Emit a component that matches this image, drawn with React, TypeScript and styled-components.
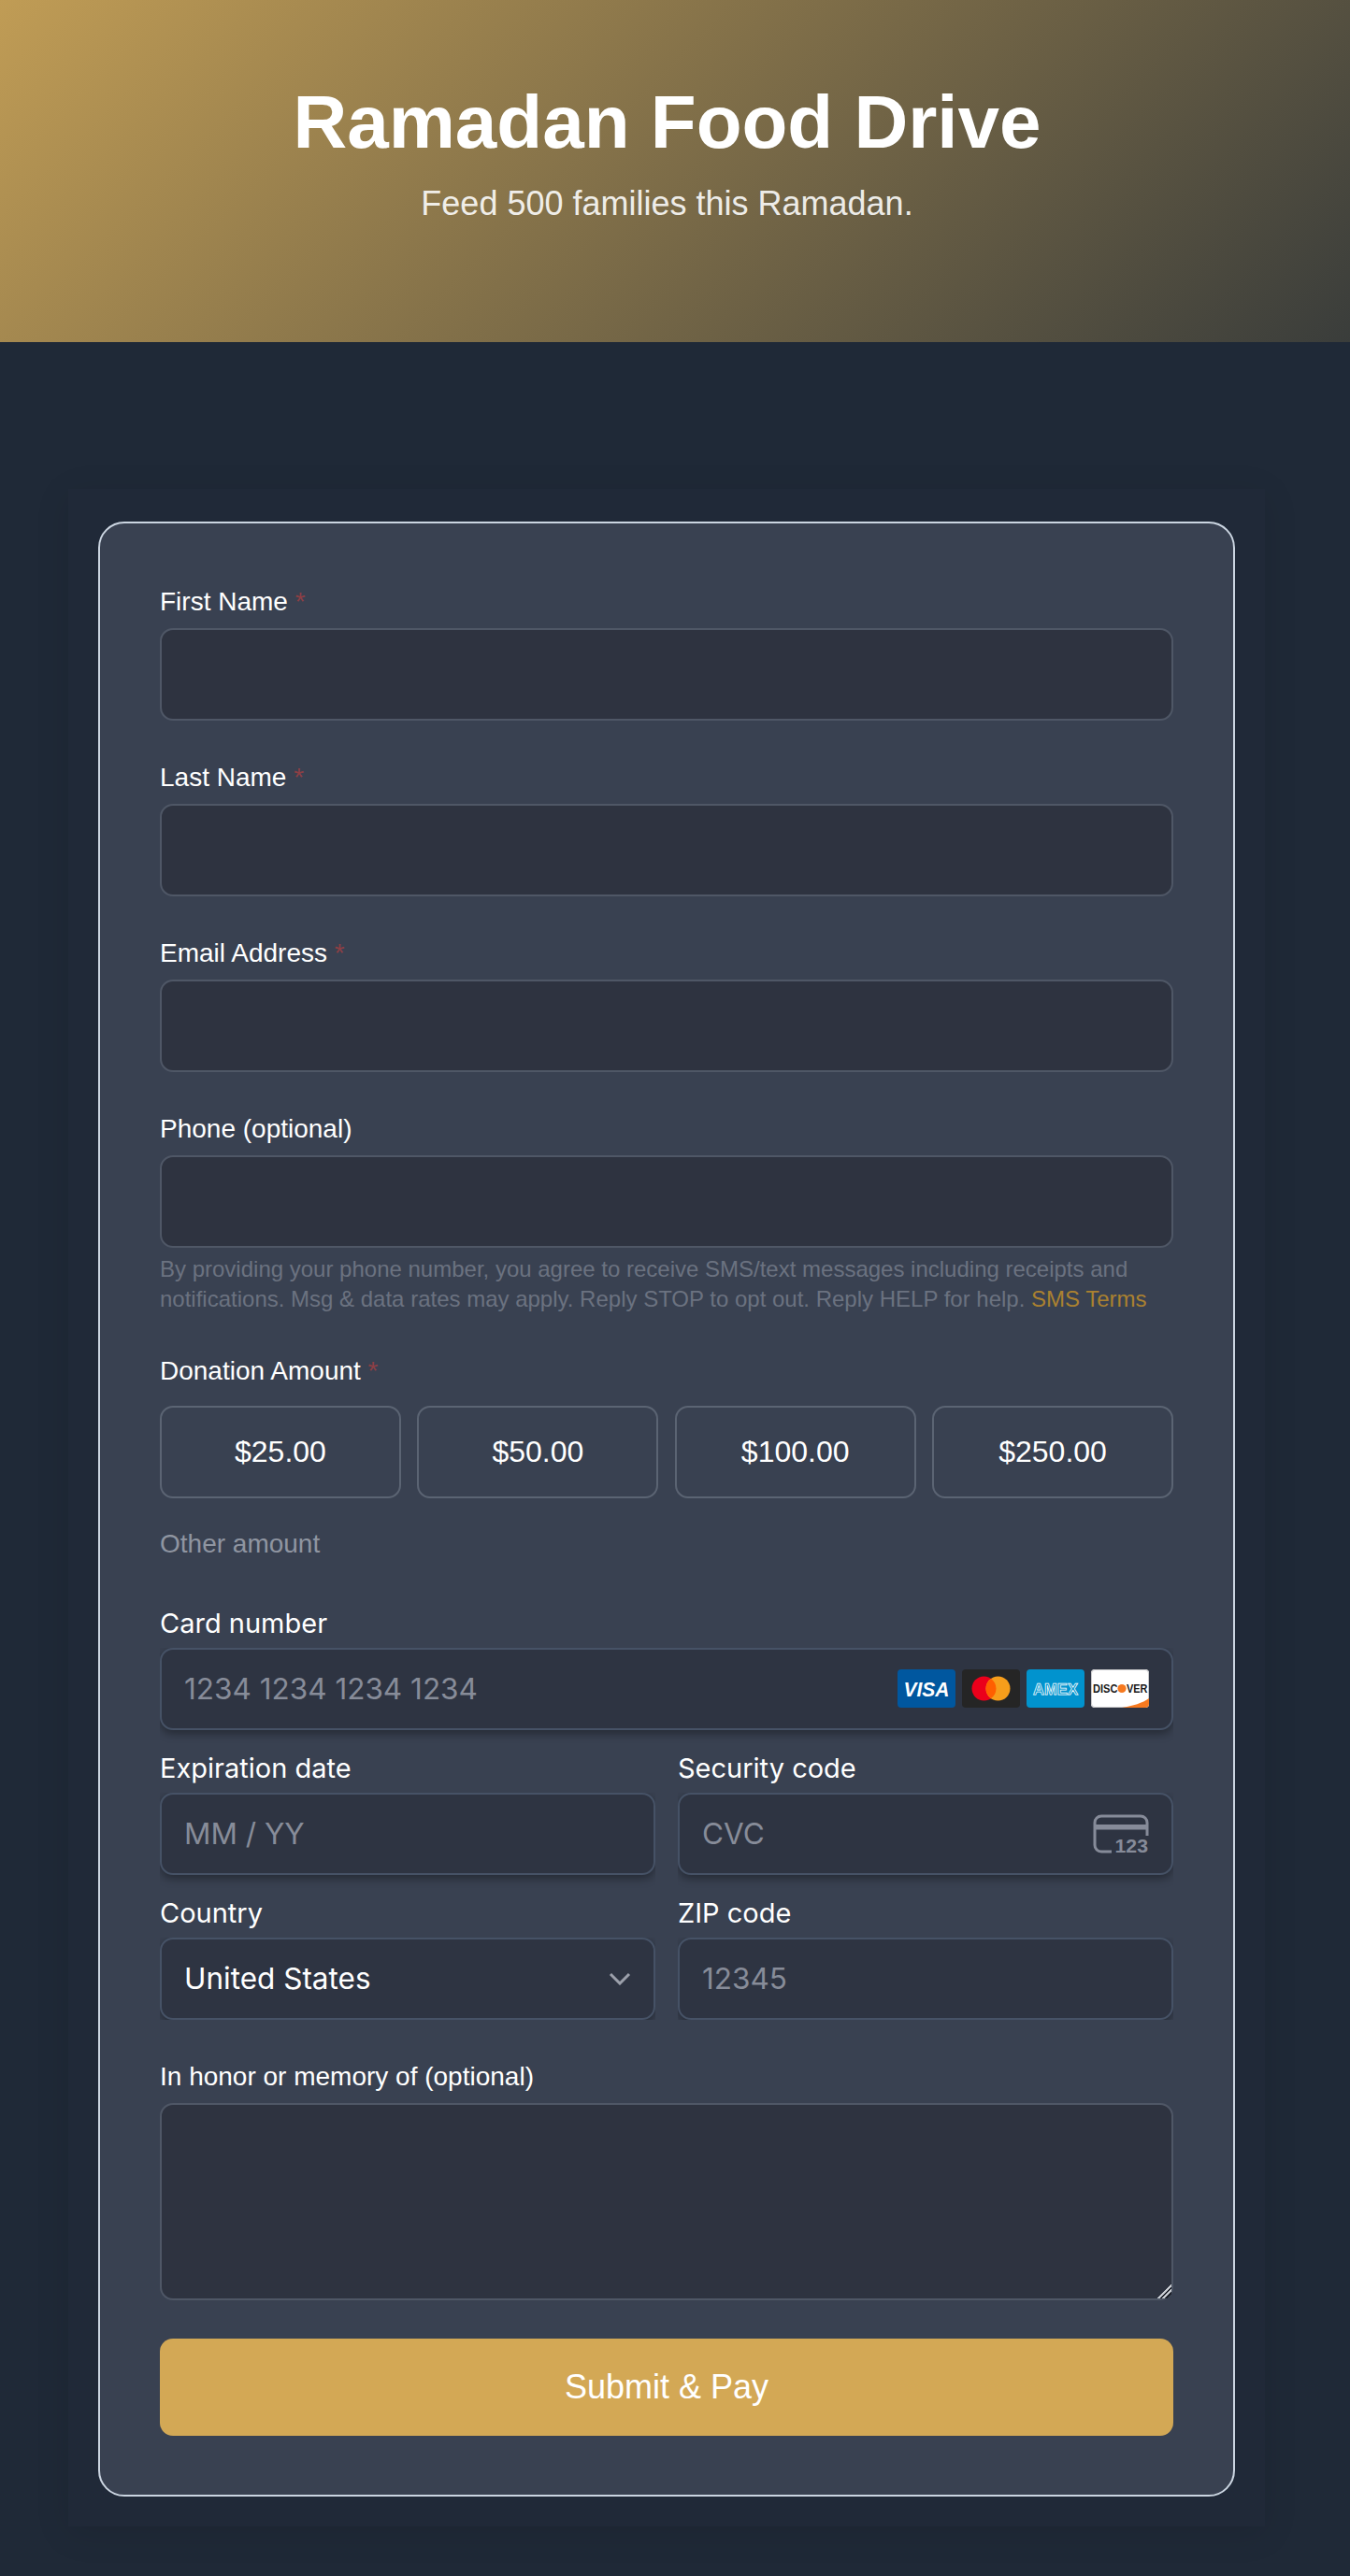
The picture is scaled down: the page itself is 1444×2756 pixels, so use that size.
import styled, { createGlobalStyle } from 'styled-components';

const GlobalStyle = createGlobalStyle`
  * {
    box-sizing: border-box;
  }
  html,
  body {
    margin: 0;
    padding: 0;
    background: #1f2937;
    color: #fff;
    font-family: 'Liberation Sans', Arial, sans-serif;
  }
`;

const amounts = ['$25.00', '$50.00', '$100.00', '$250.00'];

function VisaMark() {
  return (
    <BrandIcon viewBox="0 0 62 41">
      <rect width="62" height="41" rx="4" fill="#00579f" />
      <text
        x="31"
        y="29"
        textAnchor="middle"
        fontFamily="'Liberation Sans', sans-serif"
        fontSize="22"
        fontWeight="700"
        fontStyle="italic"
        fill="#fff"
        textLength="49"
        lengthAdjust="spacingAndGlyphs"
      >
        VISA
      </text>
    </BrandIcon>
  );
}

function MastercardMark() {
  return (
    <BrandIcon viewBox="0 0 62 41">
      <rect width="62" height="41" rx="4" fill="#252525" />
      <circle cx="23.5" cy="20.5" r="13" fill="#eb001b" />
      <circle cx="38.5" cy="20.5" r="13" fill="#f79e1b" />
      <path d="M31 9.9a13 13 0 0 1 0 21.2a13 13 0 0 1 0-21.2z" fill="#ff5f00" />
    </BrandIcon>
  );
}

function AmexMark() {
  return (
    <BrandIcon viewBox="0 0 62 41">
      <rect width="62" height="41" rx="4" fill="#0193ce" />
      <text
        x="31"
        y="27"
        textAnchor="middle"
        fontFamily="'Liberation Sans', sans-serif"
        fontSize="17"
        fontWeight="700"
        fill="#0193ce"
        stroke="#fff"
        strokeWidth="0.75"
        textLength="48"
        lengthAdjust="spacingAndGlyphs"
      >
        AMEX
      </text>
    </BrandIcon>
  );
}

function DiscoverMark() {
  return (
    <BrandIcon viewBox="0 0 62 41">
      <rect width="62" height="41" rx="4" fill="#fff" />
      <rect x="0.5" y="0.5" width="61" height="40" rx="3.5" fill="none" stroke="#c9c9cb" />
      <path d="M33 41C45 39 55 36 62 31V37a4 4 0 0 1-4 4z" fill="#f6791f" />
      <text
        x="2"
        y="24.5"
        fontFamily="'Liberation Sans', sans-serif"
        fontSize="12"
        fontWeight="700"
        fill="#1a1a1a"
        textLength="26.5"
        lengthAdjust="spacingAndGlyphs"
      >
        DISC
      </text>
      <circle cx="33" cy="20.5" r="4.6" fill="#f6791f" />
      <text
        x="38"
        y="24.5"
        fontFamily="'Liberation Sans', sans-serif"
        fontSize="12"
        fontWeight="700"
        fill="#1a1a1a"
        textLength="22.5"
        lengthAdjust="spacingAndGlyphs"
      >
        VER
      </text>
    </BrandIcon>
  );
}

function CvcMark() {
  return (
    <CvcIcon viewBox="0 0 60 46">
      <path
        d="M20 40H9a7 7 0 0 1-7-7V9a7 7 0 0 1 7-7h42a7 7 0 0 1 7 7v14"
        fill="none"
        stroke="#868b99"
        strokeWidth="3"
      />
      <rect x="2" y="11" width="56" height="5.5" fill="#868b99" />
      <text
        x="23.5"
        y="41"
        fontFamily="'Liberation Sans', sans-serif"
        fontSize="20"
        fontWeight="700"
        fill="#868b99"
        textLength="35.5"
        lengthAdjust="spacingAndGlyphs"
      >
        123
      </text>
    </CvcIcon>
  );
}

export default function App() {
  return (
    <>
      <GlobalStyle />
      <Hero>
        <HeroTitle>Ramadan Food Drive</HeroTitle>
        <HeroText>Feed 500 families this Ramadan.</HeroText>
      </Hero>
      <Main>
        <Panel>
          <Card>
            <Field>
              <Label>
                First Name <Required>*</Required>
              </Label>
              <TextInput type="text" />
            </Field>
            <Field>
              <Label>
                Last Name <Required>*</Required>
              </Label>
              <TextInput type="text" />
            </Field>
            <Field>
              <Label>
                Email Address <Required>*</Required>
              </Label>
              <TextInput type="email" />
            </Field>
            <Field>
              <Label>Phone (optional)</Label>
              <TextInput type="tel" />
              <Help>
                By providing your phone number, you agree to receive SMS/text
                messages including receipts and notifications. Msg &amp; data
                rates may apply. Reply STOP to opt out. Reply HELP for help.{' '}
                <HelpLink>SMS Terms</HelpLink>
              </Help>
            </Field>
            <Label>
              Donation Amount <Required>*</Required>
            </Label>
            <AmountGrid>
              {amounts.map((amount) => (
                <AmountButton key={amount} type="button">
                  {amount}
                </AmountButton>
              ))}
            </AmountGrid>
            <OtherAmount>Other amount</OtherAmount>

            <PaymentBlock>
              <PayLabel>Card number</PayLabel>
              <PayFrame>
                <PayField>
                  <Placeholder>1234 1234 1234 1234</Placeholder>
                  <Brands>
                    <VisaMark />
                    <MastercardMark />
                    <AmexMark />
                    <DiscoverMark />
                  </Brands>
                </PayField>
              </PayFrame>
              <PayRow>
                <div>
                  <PayLabel>Expiration date</PayLabel>
                  <PayFrame>
                    <PayField>
                      <Placeholder>MM / YY</Placeholder>
                    </PayField>
                  </PayFrame>
                </div>
                <div>
                  <PayLabel>Security code</PayLabel>
                  <PayFrame>
                    <PayField>
                      <Placeholder>CVC</Placeholder>
                      <CvcMark />
                    </PayField>
                  </PayFrame>
                </div>
              </PayRow>
              <PayRow>
                <div>
                  <PayLabel>Country</PayLabel>
                  <PayFrame $flush>
                    <PayField>
                      <PayValue>United States</PayValue>
                      <Chevron viewBox="0 0 24 14">
                        <path
                          d="M2 2l10 10L22 2"
                          fill="none"
                          stroke="#9ca0ab"
                          strokeWidth="3"
                        />
                      </Chevron>
                    </PayField>
                  </PayFrame>
                </div>
                <div>
                  <PayLabel>ZIP code</PayLabel>
                  <PayFrame $flush>
                    <PayField>
                      <Placeholder>12345</Placeholder>
                    </PayField>
                  </PayFrame>
                </div>
              </PayRow>
            </PaymentBlock>

            <MemoryField>
              <Label>In honor or memory of (optional)</Label>
              <TextArea />
            </MemoryField>
            <SubmitButton type="button">Submit &amp; Pay</SubmitButton>
          </Card>
        </Panel>
      </Main>
    </>
  );
}

const Hero = styled.header`
  height: 366px;
  padding: 85.6px 17px 0 0;
  text-align: center;
  background: linear-gradient(135deg, #c09c55, #3a3d3b);
`;

const HeroTitle = styled.h1`
  margin: 0;
  font-size: 80px;
  line-height: 90px;
  font-weight: 700;
`;

const HeroText = styled.p`
  margin: 22px 0 0;
  font-size: 36px;
  line-height: 40px;
  color: rgba(255, 255, 255, 0.9);
`;

const Main = styled.main`
  padding: 157px 0 53px 73px;
`;

const Panel = styled.div`
  width: 1280px;
  padding: 35px 32px 32px;
  background: #202938;
  box-shadow: 0 7px 35px rgba(0, 0, 0, 0.1);
`;

const Card = styled.form`
  padding: 68.3px 64px 63px;
  background: #394151;
  border: 2px solid #cbd5e1;
  border-radius: 28px;
`;

const Field = styled.div`
  margin-bottom: 45.2px;
`;

const Label = styled.label`
  display: block;
  font-size: 28px;
  line-height: 32px;
  margin-bottom: 11.7px;
  color: #fff;
`;

const Required = styled.span`
  color: #8c3f45;
`;

const TextInput = styled.input`
  display: block;
  width: 100%;
  height: 99px;
  padding: 0 26px;
  background: #2e3340;
  border: 2px solid #4f5766;
  border-radius: 14px;
  color: #fff;
  font: inherit;
  outline: none;
`;

const Help = styled.p`
  margin: 7.5px 0 0;
  font-size: 24px;
  line-height: 32px;
  color: #6b7280;
`;

const HelpLink = styled.a`
  color: #ab8130;
`;

const AmountGrid = styled.div`
  display: grid;
  grid-template-columns: repeat(4, 1fr);
  column-gap: 17.5px;
  margin-top: 20.5px;
`;

const AmountButton = styled.button`
  height: 99px;
  background: transparent;
  border: 2px solid #5b6473;
  border-radius: 14px;
  color: #fff;
  font-family: inherit;
  font-size: 32px;
`;

const OtherAmount = styled.div`
  margin-top: 31.5px;
  font-size: 28px;
  line-height: 36px;
  color: #8f95a1;
`;

const PaymentBlock = styled.div`
  margin-top: 49.8px;
  font-family: Inter, 'Liberation Sans', sans-serif;
`;

const PayLabel = styled.div`
  font-size: 29px;
  line-height: 34px;
  margin-bottom: 8.5px;
  color: #fff;
`;

const PayFrame = styled.div<{ $flush?: boolean }>`
  overflow: hidden;
  padding-bottom: ${(p) => (p.$flush ? '0' : '24px')};
  margin-bottom: ${(p) => (p.$flush ? '0' : '-24px')};
`;

const PayField = styled.div`
  display: flex;
  align-items: center;
  justify-content: space-between;
  height: 88.5px;
  padding: 0 24px;
  background: #2e3442;
  border: 2px solid #465266;
  border-radius: 14px;
  box-shadow: 0 3.5px 10px rgba(0, 0, 0, 0.35);
`;

const Placeholder = styled.span`
  font-size: 31.5px;
  color: #878c99;
`;

const PayValue = styled.span`
  font-size: 31.5px;
  color: #fff;
`;

const Brands = styled.div`
  display: flex;
  gap: 7px;
`;

const BrandIcon = styled.svg`
  display: block;
  width: 62px;
  height: 41px;
`;

const CvcIcon = styled.svg`
  display: block;
  width: 60px;
  height: 46px;
  margin-bottom: -4px;
`;

const Chevron = styled.svg`
  display: block;
  width: 24px;
  height: 14px;
`;

const PayRow = styled.div`
  display: grid;
  grid-template-columns: 1fr 1fr;
  column-gap: 24px;
  margin-top: 24px;
`;

const MemoryField = styled.div`
  margin-top: 44.8px;
`;

const TextArea = styled.textarea`
  display: block;
  width: 100%;
  height: 211px;
  padding: 18px 26px;
  background: #2e3340;
  border: 2px solid #4f5766;
  border-radius: 14px;
  color: #fff;
  font: inherit;
  outline: none;
  &::-webkit-resizer {
    background: linear-gradient(
      135deg,
      transparent 48%,
      #c8ccd2 48%,
      #c8ccd2 58%,
      #1c2029 58%,
      #1c2029 66%,
      #c8ccd2 66%,
      #c8ccd2 76%,
      #1c2029 76%,
      #1c2029 84%,
      transparent 84%
    );
  }
`;

const SubmitButton = styled.button`
  display: block;
  width: 100%;
  height: 104px;
  margin-top: 41px;
  background: #d3a855;
  border: 0;
  border-radius: 14px;
  color: #fff;
  font-family: inherit;
  font-size: 36px;
`;
